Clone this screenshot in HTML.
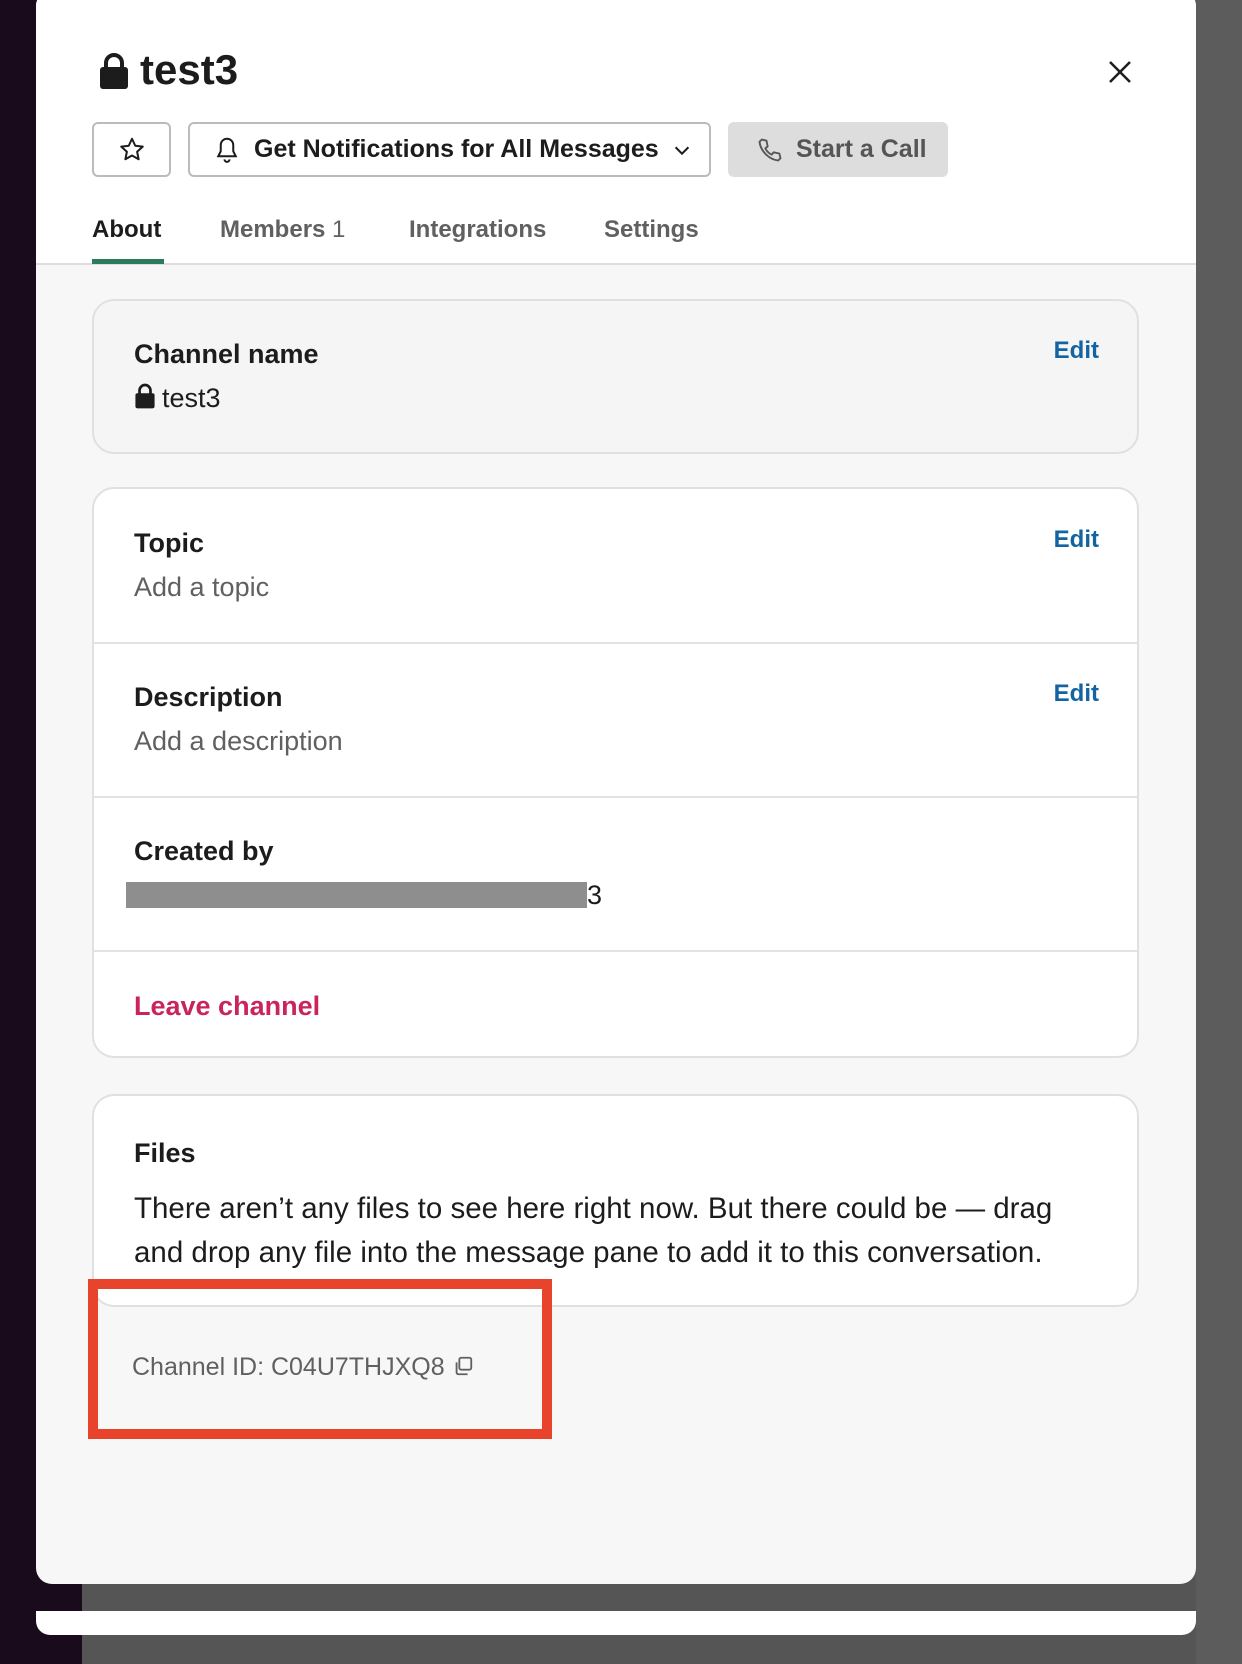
<!DOCTYPE html>
<html><head><meta charset="utf-8"><style>
*{margin:0;padding:0;box-sizing:border-box}
body{width:1242px;height:1664px;background:#555;position:relative;overflow:hidden;font-family:"Liberation Sans",sans-serif;color:#1d1c1d}
.side{position:absolute;left:0;top:0;width:82px;height:1664px;background:#1a0b1c}
.rbg{position:absolute;left:1196px;top:0;width:46px;height:1664px;background:#5c5c5c}
.modal{position:absolute;left:36px;top:-10px;width:1160px;height:1594px;background:#f7f7f7;border-radius:16px;overflow:hidden}
.head{position:absolute;left:0;top:0;width:1160px;height:275px;background:#fff;border-bottom:2px solid #ddd}
.strip{position:absolute;left:36px;top:1611px;width:1160px;height:24px;background:#fff;border-radius:0 0 14px 14px}
.abs{position:absolute}
.btn{position:absolute;top:132px;height:55px;border:2px solid #bbb;border-radius:6px;background:#fff;font-size:25px;font-weight:bold;display:flex;align-items:center}
.tab{position:absolute;top:226px;font-size:24px;color:#616061;font-weight:bold}
.card{position:absolute;left:56px;width:1047px;border:2px solid #e0e0e0;border-radius:22px;background:#fff}
.h{position:absolute;left:40px;font-size:27px;font-weight:bold}
.s{position:absolute;left:40px;font-size:27px;color:#616061}
.edit{position:absolute;right:38px;font-size:24px;font-weight:bold;color:#1264a3}
.div{position:absolute;left:0;width:100%;height:2px;background:#e3e3e3}
</style></head><body>
<div class="side"></div><div class="rbg"></div>
<div class="modal">
 <div class="head">
  <svg class="abs" style="left:62px;top:62px" width="32" height="38" viewBox="0 0 32 38"><path d="M8 16V11a8 8 0 0 1 16 0v5" fill="none" stroke="#1d1c1d" stroke-width="4"/><rect x="2" y="15" width="28" height="22" rx="3" fill="#1d1c1d"/></svg>
  <div class="abs" style="left:104px;top:56px;font-size:42px;font-weight:bold">test3</div>
  <svg class="abs" style="left:1072px;top:70px" width="24" height="24" viewBox="0 0 24 24"><path d="M2 2L22 22M22 2L2 22" stroke="#1d1c1d" stroke-width="2.5"/></svg>
  <div class="btn" style="left:56px;width:79px;justify-content:center"><svg width="30" height="30" viewBox="0 0 24 24"><path d="M12 3l2.6 5.6 6 .7-4.5 4.1 1.2 6L12 16.4 6.7 19.4l1.2-6L3.4 9.3l6-.7z" fill="none" stroke="#1d1c1d" stroke-width="1.6" stroke-linejoin="round"/></svg></div>
  <div class="btn" style="left:152px;width:523px;padding-left:22px"><svg width="30" height="30" viewBox="0 0 24 24" style="margin-right:12px"><path d="M12 3a5 5 0 0 1 5 5v5l2 4H5l2-4V8a5 5 0 0 1 5-5zM10 19.5a2 2 0 0 0 4 0" fill="none" stroke="#1d1c1d" stroke-width="1.6"/></svg>Get Notifications for All Messages<svg width="22" height="22" viewBox="0 0 24 24" style="margin-left:12px"><path d="M5 9l7 7 7-7" fill="none" stroke="#1d1c1d" stroke-width="2.2"/></svg></div>
  <div class="btn" style="left:692px;width:220px;background:#ddd;border-color:#ddd;color:#555;padding-left:26px"><svg width="28" height="28" viewBox="0 0 24 24" style="margin-right:12px"><path d="M5 3l4 1 1 5-2 1.5a11 11 0 0 0 5.5 5.5L15 14l5 1 1 4-2 2C11 20 4 13 3 5z" fill="none" stroke="#555" stroke-width="1.6" stroke-linejoin="round"/></svg>Start a Call</div>
  <div class="tab" style="left:56px;color:#1d1c1d">About</div>
  <div class="abs" style="left:56px;top:269px;width:72px;height:5px;background:#2b7a5a"></div>
  <div class="tab" style="left:184px;font-weight:bold">Members <span style="font-weight:normal">1</span></div>
  <div class="tab" style="left:373px">Integrations</div>
  <div class="tab" style="left:568px">Settings</div>
 </div>
 <div class="card" style="top:309px;height:155px;background:#f5f5f5">
  <div class="h" style="top:38px">Channel name</div>
  <div class="edit" style="top:36px">Edit</div>
  <div class="s" style="top:82px;color:#1d1c1d"><svg width="22" height="26" viewBox="0 0 32 38" style="vertical-align:-2px;margin-right:6px"><path d="M8 16V11a8 8 0 0 1 16 0v5" fill="none" stroke="#1d1c1d" stroke-width="4"/><rect x="2" y="15" width="28" height="22" rx="3" fill="#1d1c1d"/></svg>test3</div>
 </div>
 <div class="card" style="top:497px;height:571px">
  <div class="h" style="top:39px">Topic</div><div class="edit" style="top:37px">Edit</div>
  <div class="s" style="top:83px">Add a topic</div>
  <div class="div" style="top:153px"></div>
  <div class="h" style="top:193px">Description</div><div class="edit" style="top:191px">Edit</div>
  <div class="s" style="top:237px">Add a description</div>
  <div class="div" style="top:307px"></div>
  <div class="h" style="top:347px">Created by</div>
  <div class="abs" style="left:32px;top:393px;width:461px;height:26px;background:#8e8e8e"></div>
  <div class="s" style="left:493px;top:391px;color:#1d1c1d">3</div>
  <div class="div" style="top:461px"></div>
  <div class="h" style="top:502px;color:#c9245e">Leave channel</div>
 </div>
 <div class="card" style="top:1104px;height:213px">
  <div class="h" style="top:42px">Files</div>
  <div class="s" style="top:91px;width:940px;line-height:44px;color:#1d1c1d;font-size:29.5px">There aren’t any files to see here right now. But there could be — drag and drop any file into the message pane to add it to this conversation.</div>
 </div>
 <div class="abs" style="left:96px;top:1363px;font-size:25px;color:#616061">Channel ID: C04U7THJXQ8 <svg width="22" height="22" viewBox="0 0 24 24" style="vertical-align:-2px"><rect x="8" y="3" width="13" height="13" rx="2" fill="none" stroke="#616061" stroke-width="2"/><path d="M5 8v11a2 2 0 0 0 2 2h10" fill="none" stroke="#616061" stroke-width="2"/></svg></div>
</div>
<div class="abs" style="left:88px;top:1279px;width:464px;height:160px;border:10px solid #e8442c"></div>
<div class="strip"></div>
</body></html>
